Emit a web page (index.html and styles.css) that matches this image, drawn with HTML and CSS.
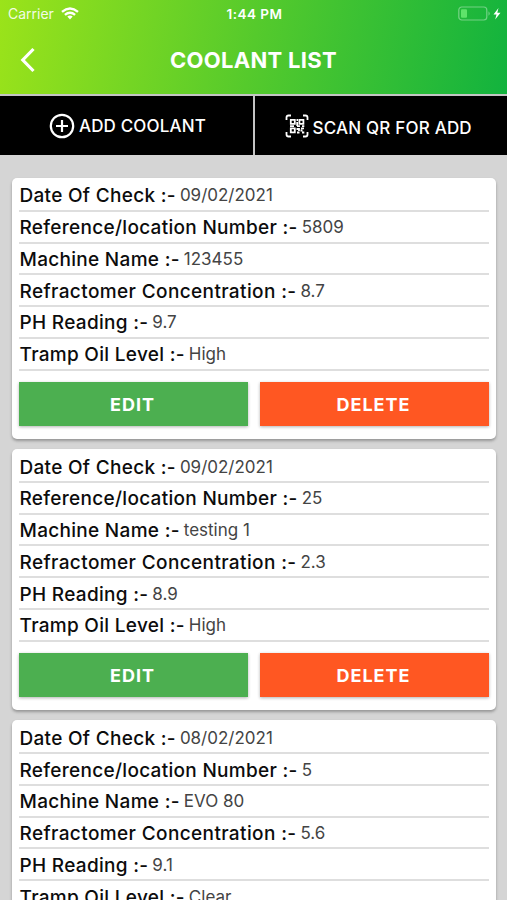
FILE: index.html
```
<!DOCTYPE html>
<html lang="en">

<head>
    <meta charset="UTF-8">
    <meta name="viewport" content="width=device-width, initial-scale=1.0">
    <title>Coolant List</title>
    <link rel="stylesheet" href="styles.css">
</head>

<body>
    <header class="header">
        <div class="status">
            <div class="carrier">
                <span>Carrier</span>
                <svg class="wifi" width="18" height="13" viewBox="0 0 18 13" fill="none" stroke="#fff" stroke-width="2.4">
                    <path d="M1 4.8Q9-2 17 4.8M3.9 7.8Q9 3.5 14.1 7.8" />
                    <path d="M6.3 9.6Q9 7.4 11.7 9.6L9 12.5Z" fill="#fff" stroke="none" />
                </svg>
            </div>
            <span class="time">1:44 PM</span>
            <div class="power">
                <svg width="43" height="16" viewBox="0 0 43 16">
                    <rect x=".8" y="1" width="28" height="13" rx="3" fill="none" stroke="#fff" stroke-opacity=".38" stroke-width="1.2" />
                    <rect x="3" y="3.2" width="6" height="8.6" rx="1" fill="#5fe36a" />
                    <path d="M30.5 5.2Q33 7.5 30.5 9.8Z" fill="#fff" fill-opacity=".4" />
                    <path d="M40.5 2L35.5 8.4H38.5L37.2 13.4L42.5 6.8H39.3Z" fill="#fff" />
                </svg>
            </div>
        </div>
        <div class="nav">
            <svg class="back" width="16" height="26" viewBox="0 0 16 26" fill="none" stroke="#fff" stroke-width="3.2">
                <path d="M13.5 2L2.8 13L13.5 24" />
            </svg>
            <h1 class="title">COOLANT LIST</h1>
        </div>
    </header>

    <div class="actions">
        <div class="action">
            <svg width="26" height="26" viewBox="0 0 26 26" fill="none" stroke="#fff" stroke-width="2.2">
                <circle cx="13" cy="13" r="11.2" />
                <path d="M13 7V19M7 13H19" />
            </svg>
            <span class="add-text">ADD COOLANT</span>
        </div>
        <div class="action scan">
            <svg width="24" height="24" viewBox="0 0 24 24" fill="none" stroke="#fff" stroke-width="1.8">
                <path d="M1.5 6V3.5Q1.5 1.5 3.5 1.5H6M18 1.5H20.5Q22.5 1.5 22.5 3.5V6M22.5 18V20.5Q22.5 22.5 20.5 22.5H18M6 22.5H3.5Q1.5 22.5 1.5 20.5V18" />
                <path d="M5.8 5.8H9.8V9.8H5.8ZM14.4 5.8H18.4V9.8H14.4ZM5.8 14.4H9.8V18.4H5.8Z" />
                <path d="M11.5 6H13M12.2 8V12M5 12.2H9M12 12.2H15M17 12.2H19.3M11.5 15H14V17M16 14.4H19M12 18.5H14.5M15.5 16.5H17.5M17 18.5H19.3" />
            </svg>
            <span class="scan-text">SCAN QR FOR ADD</span>
        </div>
    </div>

    <main class="list">
        <div class="card">
            <div class="row"><b>Date Of Check :-</b><span>09/02/2021</span></div>
            <div class="row"><b>Reference/location Number :-</b><span>5809</span></div>
            <div class="row"><b>Machine Name :-</b><span>123455</span></div>
            <div class="row"><b class="conc">Refractomer Concentration :-</b><span>8.7</span></div>
            <div class="row"><b>PH Reading :-</b><span>9.7</span></div>
            <div class="row"><b>Tramp Oil Level :-</b><span>High</span></div>
            <div class="buttons">
                <button class="edit">EDIT</button>
                <button class="delete">DELETE</button>
            </div>
        </div>

        <div class="card">
            <div class="row"><b>Date Of Check :-</b><span>09/02/2021</span></div>
            <div class="row"><b>Reference/location Number :-</b><span>25</span></div>
            <div class="row"><b>Machine Name :-</b><span>testing 1</span></div>
            <div class="row"><b class="conc">Refractomer Concentration :-</b><span>2.3</span></div>
            <div class="row"><b>PH Reading :-</b><span>8.9</span></div>
            <div class="row"><b>Tramp Oil Level :-</b><span>High</span></div>
            <div class="buttons">
                <button class="edit">EDIT</button>
                <button class="delete">DELETE</button>
            </div>
        </div>

        <div class="card">
            <div class="row"><b>Date Of Check :-</b><span>08/02/2021</span></div>
            <div class="row"><b>Reference/location Number :-</b><span>5</span></div>
            <div class="row"><b>Machine Name :-</b><span>EVO 80</span></div>
            <div class="row"><b class="conc">Refractomer Concentration :-</b><span>5.6</span></div>
            <div class="row"><b>PH Reading :-</b><span>9.1</span></div>
            <div class="row"><b>Tramp Oil Level :-</b><span>Clear</span></div>
            <div class="buttons">
                <button class="edit">EDIT</button>
                <button class="delete">DELETE</button>
            </div>
        </div>
    </main>
</body>

</html>
```
FILE: styles.css
```
* {
    box-sizing: border-box;
}

body {
    margin: 0;
    height: 900px;
    overflow: hidden;
    background-color: #d5d5d5;
    font-family: Inter, "Liberation Sans", sans-serif;
}

.header {
    height: 94px;
    background: linear-gradient(100deg, #9be31a 0%, #55ca2c 50%, #12b33e 100%);
    color: #fff;
}

.status {
    height: 27px;
    padding: 0 6px 0 8px;
    display: grid;
    grid-template-columns: 1fr auto 1fr;
    align-items: center;
    font-size: 14px;
}

.carrier {
    display: flex;
    align-items: center;
    gap: 7px;
    color: rgba(255, 255, 255, 0.9);
}

.time {
    font-weight: 600;
    font-size: 13.5px;
    letter-spacing: 0.5px;
}

.power {
    display: flex;
    justify-content: flex-end;
}

.nav {
    height: 66px;
    padding-left: 20px;
    display: flex;
    align-items: center;
}

.title {
    margin: 0 0 0 134px;
    font-size: 22px;
    font-weight: 700;
    letter-spacing: 0.3px;
}

.actions {
    height: 61px;
    padding: 2px 0 0;
    display: flex;
    gap: 2px;
    background-color: #c4c4c4;
}

.action {
    width: 253px;
    padding-left: 49px;
    display: flex;
    align-items: center;
    gap: 4px;
    background-color: #000;
    color: #fff;
    font-size: 17px;
    font-weight: 500;
    white-space: nowrap;
}

.scan {
    padding-left: 30px;
}

.add-text {
    letter-spacing: 0.15px;
}

.scan-text {
    letter-spacing: 0.2px;
    padding-top: 4px;
}

.list {
    padding: 23px 11px 0 12px;
}

.card {
    height: 261.2px;
    margin-bottom: 10px;
    padding: 2px 7px 0;
    background-color: #fff;
    border-radius: 5px;
    box-shadow: 0 2px 3px rgba(0, 0, 0, 0.3);
}

.row {
    height: 31.75px;
    padding: 2px 0 0 0.5px;
    display: flex;
    align-items: center;
    gap: 4px;
    border-bottom: 2px solid #dedede;
    font-size: 17px;
    color: #444;
    white-space: nowrap;
}

.row b {
    font-size: 19px;
    font-weight: 500;
    letter-spacing: 0.3px;
    color: #0c0c0c;
}

.row span {
    padding-bottom: 1px;
}

.row .conc {
    letter-spacing: 0.38px;
}

.buttons {
    padding-top: 11.5px;
    display: flex;
    gap: 12px;
}

.buttons button {
    flex: 1;
    height: 44px;
    padding: 0 8px 0 6px;
    border: none;
    color: #fff;
    font-family: inherit;
    font-size: 18px;
    font-weight: 700;
    letter-spacing: 1px;
    box-shadow: 0 1px 3px rgba(0, 0, 0, 0.3);
}

.buttons .edit {
    background-color: #4caf50;
}

.buttons .delete {
    background-color: #ff5722;
}
```
